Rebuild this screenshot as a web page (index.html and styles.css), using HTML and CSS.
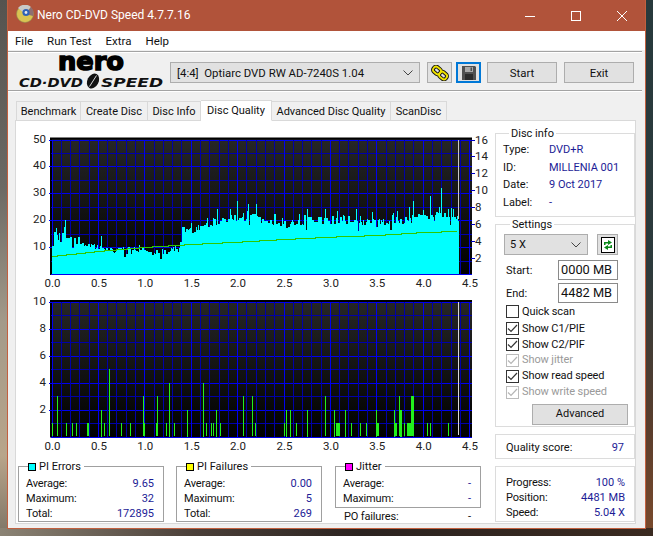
FILE: index.html
```html
<!DOCTYPE html>
<html lang="en">
<head>
<meta charset="utf-8">
<title>Nero CD-DVD Speed 4.7.7.16</title>
<link rel="stylesheet" href="styles.css">
</head>
<body>
<div class="window">
  <header class="titlebar">
    <svg class="app-icon" viewBox="0 0 18 18" width="18" height="18">
      <circle cx="9" cy="9" r="8.5" fill="#d9c452" stroke="#8f8a50" stroke-width=".6"/>
      <path d="M9 9 L2 3 A9 9 0 0 1 15 2 Z" fill="#c9c9c9"/>
      <path d="M9 9 L15 2 A9 9 0 0 1 17 11 Z" fill="#8d6f72"/>
      <circle cx="10" cy="7.5" r="3.6" fill="#2f62b8"/>
      <circle cx="10" cy="7.5" r="1.4" fill="#e7e7e7"/>
    </svg>
    <span class="app-title">Nero CD-DVD Speed 4.7.7.16</span>
    <div class="win-controls">
      <span class="win-btn"><svg viewBox="0 0 10 10" width="10" height="10"><path d="M0 5.5H10" stroke="#fff" fill="none"/></svg></span>
      <span class="win-btn"><svg viewBox="0 0 10 10" width="10" height="10"><rect x=".5" y=".5" width="9" height="9" stroke="#fff" fill="none"/></svg></span>
      <span class="win-btn"><svg viewBox="0 0 10 10" width="10" height="10"><path d="M0 0L10 10M10 0L0 10" stroke="#fff" fill="none"/></svg></span>
    </div>
  </header>
  <nav class="menubar">
    <span>File</span><span>Run Test</span><span>Extra</span><span>Help</span>
  </nav>
  <section class="toolbar">
    <svg class="logo" viewBox="0 0 146 37" width="146" height="37">
      <text class="logo-nero" x="40" y="18" textLength="66" lengthAdjust="spacingAndGlyphs">nero</text>
      <text class="logo-sub" x="1" y="35" textLength="64" lengthAdjust="spacingAndGlyphs">CD·DVD</text>
      <ellipse cx="75" cy="29" rx="5.6" ry="7.8" transform="rotate(28 75 29)" fill="#111"/>
      <path d="M71.500 34.500L78.500 23.500" stroke="#f0f0f0" stroke-width=".9"/>
      <text class="logo-sub" x="83" y="35" textLength="62" lengthAdjust="spacingAndGlyphs">SPEED</text>
    </svg>
    <div class="select drive"><span>[4:4]&nbsp;&nbsp;Optiarc DVD RW AD-7240S 1.04</span>
      <svg class="chev" viewBox="0 0 10 6" width="10" height="6"><path d="M.5 .5L5 5L9.500 .5" fill="none" stroke="#444"/></svg>
    </div>
    <button class="btn icon-btn">
      <svg viewBox="0 0 18 16" width="18" height="16">
        <g fill="none" transform="rotate(40 9 8)">
          <rect x="1" y="5" width="8" height="6" rx="2.500" stroke="#111" stroke-width="3.800"/>
          <rect x="9" y="5" width="8" height="6" rx="2.500" stroke="#111" stroke-width="3.800"/>
          <rect x="1" y="5" width="8" height="6" rx="2.500" stroke="#f0e400" stroke-width="1.900"/>
          <rect x="9" y="5" width="8" height="6" rx="2.500" stroke="#f0e400" stroke-width="1.900"/>
        </g>
      </svg>
    </button>
    <button class="btn icon-btn save">
      <svg viewBox="0 0 14 14" width="14" height="14">
        <path d="M0 0H13L14 1V14H0Z" fill="#505050"/>
        <rect x="3" y="1" width="8" height="5" fill="#a9a9a9"/>
        <rect x="8.500" y="1.500" width="1.500" height="3.500" fill="#505050"/>
        <rect x="3" y="8" width="8" height="6" fill="#2c2c2c"/>
      </svg>
    </button>
    <button class="btn wide start">Start</button>
    <button class="btn wide exit">Exit</button>
  </section>
  <div class="tabs">
    <span class="tab t1">Benchmark</span>
    <span class="tab t2">Create Disc</span>
    <span class="tab t3">Disc Info</span>
    <span class="tab t4 active">Disc Quality</span>
    <span class="tab t5">Advanced Disc Quality</span>
    <span class="tab t6">ScanDisc</span>
  </div>
  <main class="panel">
    <div class="left-col">
      <svg id="chart-top" class="chart" viewBox="18 128 472 164" width="472" height="164"></svg>
      <svg id="chart-bottom" class="chart" viewBox="18 292 472 164" width="472" height="164"></svg>
      <div class="legends">
        <fieldset class="legend">
          <legend><i class="swatch cyan"></i>PI Errors</legend>
          <div class="row"><span>Average:</span><b>9.65</b></div>
          <div class="row"><span>Maximum:</span><b>32</b></div>
          <div class="row"><span>Total:</span><b>172895</b></div>
        </fieldset>
        <fieldset class="legend">
          <legend><i class="swatch yellow"></i>PI Failures</legend>
          <div class="row"><span>Average:</span><b>0.00</b></div>
          <div class="row"><span>Maximum:</span><b>5</b></div>
          <div class="row"><span>Total:</span><b>269</b></div>
        </fieldset>
        <div class="jitter-col">
          <fieldset class="legend jitter">
            <legend><i class="swatch magenta"></i>Jitter</legend>
            <div class="row"><span>Average:</span><b>-</b></div>
            <div class="row"><span>Maximum:</span><b>-</b></div>
          </fieldset>
          <div class="row po"><span>PO failures:</span><b>-</b></div>
        </div>
      </div>
    </div>
    <aside class="right-col">
      <fieldset class="box info">
        <legend>Disc info</legend>
        <div class="info-row"><span>Type:</span><b>DVD+R</b></div>
        <div class="info-row"><span>ID:</span><b>MILLENIA 001</b></div>
        <div class="info-row"><span>Date:</span><b>9 Oct 2017</b></div>
        <div class="info-row"><span>Label:</span><b>-</b></div>
      </fieldset>
      <fieldset class="box settings">
        <legend>Settings</legend>
        <div class="speed-row">
          <div class="select speed"><span>5 X</span>
            <svg class="chev" viewBox="0 0 10 6" width="10" height="6"><path d="M.5 .5L5 5L9.500 .5" fill="none" stroke="#444"/></svg>
          </div>
          <button class="btn refresh">
            <svg viewBox="0 0 14 16" width="14" height="16">
              <rect x=".5" y=".5" width="13" height="15" fill="#fff" stroke="#000"/>
              <path d="M3 8V5H7V3L11 5.500L7 8V6.500H4.500V8Z" fill="#0a8a1a"/>
              <path d="M11 8V11H7V13L3 10.500L7 8V9.500H9.500V8Z" fill="#0a8a1a"/>
            </svg>
          </button>
        </div>
        <label class="field first"><span>Start:</span><span class="input">0000 MB</span></label>
        <label class="field"><span>End:</span><span class="input">4482 MB</span></label>
        <div class="check quick"><i class="cb"></i>Quick scan</div>
        <div class="check c1"><i class="cb"><svg viewBox="0 0 13 13" width="13" height="13"><path d="M2 6.500L5 9.500L11 3" fill="none" stroke="#333" stroke-width="1.200"/></svg></i>Show C1/PIE</div>
        <div class="check"><i class="cb"><svg viewBox="0 0 13 13" width="13" height="13"><path d="M2 6.500L5 9.500L11 3" fill="none" stroke="#333" stroke-width="1.200"/></svg></i>Show C2/PIF</div>
        <div class="check off"><i class="cb"><svg viewBox="0 0 13 13" width="13" height="13"><path d="M2 6.500L5 9.500L11 3" fill="none" stroke="#b5b5b5" stroke-width="1.200"/></svg></i>Show jitter</div>
        <div class="check"><i class="cb"><svg viewBox="0 0 13 13" width="13" height="13"><path d="M2 6.500L5 9.500L11 3" fill="none" stroke="#333" stroke-width="1.200"/></svg></i>Show read speed</div>
        <div class="check off"><i class="cb"><svg viewBox="0 0 13 13" width="13" height="13"><path d="M2 6.500L5 9.500L11 3" fill="none" stroke="#b5b5b5" stroke-width="1.200"/></svg></i>Show write speed</div>
        <button class="btn advanced">Advanced</button>
      </fieldset>
      <div class="box quality"><span>Quality score:</span><b>97</b></div>
      <div class="box progress">
        <div class="row"><span>Progress:</span><b>100 %</b></div>
        <div class="row"><span>Position:</span><b>4481 MB</b></div>
        <div class="row"><span>Speed:</span><b>5.04 X</b></div>
      </div>
    </aside>
  </main>
</div>
<script src="chart.js"></script>
</body>
</html>
```
FILE: styles.css
```css
* { box-sizing: border-box; }
html, body { margin: 0; height: 536px; overflow: hidden; }
body {
  font: 11px/14px Roboto, "Noto Sans", sans-serif;
  color: #111;
  background-color: #333;
  background-image:
    linear-gradient(90deg, #8b8374 0, #4a3f38 30%, #2b2320 55%, #3a2a20 100%),
    linear-gradient(180deg, #55534f 0, #6b6964 35%, #a39a8a 60%, #b8a58a 85%, #7d7466 100%),
    linear-gradient(180deg, #27393c 0, #2c3a3c 50%, #5a3d2c 80%, #7a4a2c 100%);
  background-size: 100% 8px, 50% 100%, 50% 100%;
  background-position: 0 100%, 0 0, 100% 0;
  background-repeat: no-repeat;
}
button { font: inherit; color: inherit; padding: 0; }
.window {
  width: 639px;
  height: 529px;
  margin-left: 7px;
  background: #f0f0f0;
  border: 1px solid #c2603f;
  border-top: 0;
}
.titlebar {
  height: 31px;
  background: #b1533a;
  display: flex;
  align-items: center;
  color: #fff;
  font-size: 12px;
  padding-left: 8px;
}
.app-icon { margin-right: 3px; margin-top: -3px; }
.app-title { margin-top: -1px; }
.win-controls { margin-left: auto; display: flex; height: 31px; }
.win-btn { width: 46px; display: flex; align-items: center; justify-content: center; }
.menubar {
  height: 19px;
  background: #fff;
  display: flex;
  gap: 14px;
  align-items: center;
  padding-left: 7px;
  font-size: 11.5px;
}
.toolbar {
  height: 40px;
  margin: 1px 3px 0 0;
  border-top: 1px solid #a3a3a3;
  border-bottom: 1px solid #a3a3a3;
  box-shadow: inset 0 1px #fff, 0 1px #fff;
  display: flex;
  align-items: center;
  padding-left: 10px;
  font-size: 11.4px;
}
.logo { flex: none; margin-top: -1px; overflow: visible; }
.logo-nero { font: 700 25px "DejaVu Sans", sans-serif; fill: #000; stroke: #000; stroke-width: 1.500px; }
.logo-sub { font: italic 700 12px "DejaVu Sans", sans-serif; fill: #111; }
.select {
  background: #e1e1e1;
  border: 1px solid #adadad;
  display: flex;
  align-items: center;
  justify-content: space-between;
  padding: 0 6px 0 5px;
}
.btn {
  background: #e1e1e1;
  border: 1px solid #adadad;
  display: flex;
  align-items: center;
  justify-content: center;
}
.toolbar .select, .toolbar .btn { height: 21px; margin-top: 3px; }
.drive { width: 250px; margin-left: 6px; padding-left: 6px; }
.icon-btn { width: 25px; margin-left: 7px; }
.save { margin-left: 4px; border: 2px solid #0078d7; }
.wide { width: 70px; }
.start { margin-left: 6px; }
.exit { margin-left: 7px; }
.tabs {
  display: flex;
  align-items: flex-end;
  height: 21px;
  margin: 9px 0 -1px 8px;
  position: relative;
  z-index: 1;
}
.tab {
  height: 20px;
  background: #f0f0f0;
  border: 1px solid #d9d9d9;
  border-left-width: 0;
  display: flex;
  align-items: center;
  justify-content: center;
  padding-top: 2px;
}
.t1 { width: 65px; border-left-width: 1px; }
.t2 { width: 67px; }
.t3 { width: 53px; }
.t4 { width: 71px; }
.t5 { width: 119px; }
.t6 { width: 56px; }
.tab.active { height: 21px; background: #fff; border-bottom-color: #fff; padding-top: 0; }
.panel {
  width: 621px;
  height: 404px;
  margin-left: 7px;
  background: #fff;
  border: 1px solid #d9d9d9;
  display: flex;
  padding: 7px 0 0 2px;
}
.left-col { width: 472px; flex: none; }
.chart { display: block; }
.chart text { font: 11.5px Roboto, "Noto Sans", sans-serif; fill: #222; }
.legends { display: flex; margin-top: 3px; height: 65px; }
fieldset { margin: 0; min-width: 0; }
.legend {
  width: 146px;
  height: 63px;
  border: 1px solid #a0a0a0;
  padding: 0 9px 0 7px;
  margin-right: 12px;
}
.legend legend { padding: 2px 3px 0 0; margin-left: 2px; display: flex; align-items: center; line-height: 12px; height: 14px; }
.swatch { width: 8px; height: 8px; border: 1px solid #000; margin-right: 3px; display: block; }
.cyan { background: #00ffff; }
.yellow { background: #ffff00; }
.magenta { background: #ff00ff; }
.row { display: flex; justify-content: space-between; height: 15px; line-height: 15px; }
.row span { letter-spacing: -.15px; }
.legend .row:first-of-type { margin-top: 3px; }
b { font-weight: 400; color: #1c1c96; }
.jitter-col { width: 146px; margin-left: 1px; }
.jitter { height: 49px; margin: 0; }
.po { height: 17px; padding: 1px 10px 0 9px; }
.po b { color: #111; }
.right-col { margin: -2px 0 0 5px; width: 140px; flex: none; }
.box { border: 1px solid #dcdcdc; width: 140px; padding: 0; margin: 0; }
.box legend { margin-left: 6px; padding: 2px 2px 0; height: 14px; line-height: 12px; }
.info { height: 91px; padding: 1px 0 0 7px; }
.info-row { display: flex; height: 17.700px; line-height: 17px; }
.info-row span { width: 46px; }
.settings { margin-top: 0; height: 210px; padding: 3px 0 0 8px; }
.speed-row { display: flex; gap: 9px; }
.select.speed { width: 84px; height: 21px; }
.refresh { width: 21px; height: 21px; }
.field { display: flex; align-items: center; height: 20px; padding-left: 2px; }
.field.first { margin-top: 5px; margin-bottom: 3px; }
.field > span:first-child { width: 52px; padding-top: 2px; }
.input { width: 60px; height: 20px; border: 1px solid #8a8a8a; background: #fff; padding-left: 2px; line-height: 17px; font-size: 12.8px; }
.check { display: flex; align-items: center; height: 15.800px; padding-left: 2px; letter-spacing: -.1px; }
.quick { height: 17px; }
.c1 { margin-top: 1px; }
.cb { width: 13px; height: 13px; border: 1px solid #333; background: #fff; margin-right: 3px; display: block; flex: none; }
.cb svg { display: block; margin: -1px; }
.off { color: #9a9a9a; }
.off .cb { border-color: #bbb; }
.advanced { width: 96px; height: 21px; margin: 4px 0 0 28px; }
.quality { margin-top: 7px; height: 25px; display: flex; justify-content: space-between; align-items: center; padding: 2px 10px 0 10px; }
.progress { margin-top: 7px; height: 56px; padding: 8px 9px 0 10px; }
```
FILE: chart.js
```js
(function () {
  var NS = 'http://www.w3.org/2000/svg';
  var X0 = 51.5, SCALE = 92.8, END = 458;

  function add(svg, tag, attrs, text) {
    var el = document.createElementNS(NS, tag);
    for (var k in attrs) el.setAttribute(k, attrs[k]);
    if (text !== undefined) el.textContent = text;
    svg.appendChild(el);
    return el;
  }
  function interp(table, t) {
    for (var i = 1; i < table.length; i++) {
      if (t <= table[i][0]) {
        var a = table[i - 1], b = table[i];
        return a[1] + (b[1] - a[1]) * (t - a[0]) / (b[0] - a[0]);
      }
    }
    return table[table.length - 1][1];
  }

  function frame(svg, id, top, bottom, labels) {
    var defs = add(svg, 'defs', {});
    var g = add(defs, 'linearGradient', { id: id, x1: 0, y1: 0, x2: 0, y2: 1 });
    add(g, 'stop', { offset: 0, 'stop-color': '#262626' });
    add(g, 'stop', { offset: 1, 'stop-color': '#000' });
    add(svg, 'rect', { x: 50, y: top - 2, width: 422, height: bottom - top + 3, fill: '#000' });
    add(svg, 'rect', { x: 52, y: top, width: 420, height: bottom - top, fill: 'url(#' + id + ')' });
    var h = bottom - top;
    var grid = add(svg, 'g', { 'shape-rendering': 'crispEdges' });
    for (var i = 0; i <= labels * 2; i++) {
      var y = Math.round(top + h * i / (labels * 2)) + .5;
      add(grid, 'path', { d: 'M51 ' + y + 'H472', stroke: i % 2 ? '#0000a8' : '#0000f0', fill: 'none' });
    }
    for (var j = 0; j <= 45; j++) {
      var x = Math.round(X0 + 9.28 * j) + .5;
      add(grid, 'path', { d: 'M' + x + ' ' + top + 'V' + bottom, stroke: j % 5 ? '#0000a8' : '#0000f0', fill: 'none' });
    }
    for (var k = 0; k <= 9; k++) {
      var v = (k * 0.5).toFixed(1);
      add(svg, 'text', { x: X0 + 46.4 * k + 1, y: bottom + 13, 'text-anchor': 'middle' }, v);
    }
    return grid;
  }

  /* upper chart: PI errors */
  var top = document.getElementById('chart-top');
  var T = 139.5, B = 274;
  frame(top, 'bgTop', T, B, 5);
  [50, 40, 30, 20, 10].forEach(function (v, i) {
    var y = T + (B - T) * i / 5;
    add(top, 'path', { d: 'M49 ' + Math.round(y) + '.5H51', stroke: '#00f' });
    add(top, 'text', { x: 46, y: y + 3, 'text-anchor': 'end' }, v);
  });
  [16, 14, 12, 10, 8, 6, 4, 2].forEach(function (v, i) {
    var y = T + 16.9 * i;
    add(top, 'path', { d: 'M471 ' + Math.round(y) + '.5H475', stroke: '#0000c8' });
    add(top, 'text', { x: 475, y: y + 4 }, v);
  });

  var env = [[0, 14.5], [.15, 13.5], [.3, 11], [.5, 10], [.56, 9], [.6, 8.5], [1, 8.5], [1.38, 9], [1.39, 16], [1.5, 16.5], [1.7, 18.5],
    [1.9, 21], [2.2, 21], [2.5, 18.5], [2.8, 20], [3.2, 20], [3.5, 19], [3.8, 20], [4, 21.5], [4.2, 22], [4.38, 20]];
  var spikes = { 0.15: 20, 0.05: 17, 0.53: 14, 1.68: 21, 1.78: 24, 1.92: 24, 2: 27, 2.12: 26, 2.2: 26, 2.75: 24, 2.95: 24,
    3.28: 24, 3.45: 23, 3.9: 27, 3.85: 25, 4.08: 29, 4.18: 25, 4.2: 32, 4.27: 24, 4.33: 24 };
  var seed = 12345;
  function rnd() { seed = (seed * 1664525 + 1013904223) % 4294967296; return seed / 4294967296; }
  var d = '', prev = 0;
  var spikeAt = {};
  Object.keys(spikes).forEach(function (k) { spikeAt[Math.round(X0 + k * SCALE)] = spikes[k]; });
  for (var x = 52; x <= END; x++) {
    var t = (x - X0) / SCALE;
    var base = interp(env, t);
    var r = rnd();
    var v;
    if (x % 2 === 0 || r > .7) {
      v = base + (rnd() - .5) * 3;
      if (r < .08) v -= 2.500;
      if (r > .94) v += 2.500;
      prev = v;
    } else {
      v = prev;
    }
    if (spikeAt[x]) v = spikeAt[x];
    var y = Math.round(B - v * 2.69);
    d += 'M' + (x + .5) + ' ' + B + 'V' + y;
  }
  add(top, 'path', { d: d, stroke: '#00ffff', fill: 'none', 'shape-rendering': 'crispEdges' });
  add(top, 'path', { d: 'M458.500 ' + T + 'V219', stroke: '#c8c8c8', fill: 'none', 'shape-rendering': 'crispEdges' });

  var lineTable = [[52, 256], [98, 251], [144, 247], [191, 244], [238, 241.700], [284, 239], [330, 236.700], [377, 235], [423, 232], [457, 231]];
  var pts = 'M52 256', cur = 256;
  for (var lx = 53; lx <= 457; lx++) {
    var ly = Math.round(interp(lineTable, lx));
    if (ly !== cur) { pts += 'H' + lx + 'V' + ly; cur = ly; }
  }
  pts += 'H457';
  add(top, 'path', { d: pts, stroke: '#2fc800', 'stroke-width': 1, fill: 'none', transform: 'translate(0 .5)', 'shape-rendering': 'crispEdges' });

  /* lower chart: PI failures */
  var bot = document.getElementById('chart-bottom');
  var T2 = 302, B2 = 436.5;
  frame(bot, 'bgBot', T2, B2, 5);
  [10, 8, 6, 4, 2].forEach(function (v, i) {
    var y = T2 + (B2 - T2) * i / 5;
    add(bot, 'path', { d: 'M49 ' + Math.round(y) + '.5H51', stroke: '#00f' });
    add(bot, 'text', { x: 46, y: y + 3, 'text-anchor': 'end' }, v);
  });
  /* [page x, value, width] */
  var bars = [[52, 1], [57, 3], [66, 1], [72, 1], [76, 1], [86.500, 1, 2], [101, 2], [104, 1], [109, 5], [121, 1], [130, 1],
    [142.500, 1, 2], [143, 3], [156, 1, 2], [157, 3], [166, 1], [169, 4], [174, 1], [187, 2], [203, 4], [206, 1], [211, 1], [213, 1],
    [216, 2], [220, 1], [243, 3], [252, 3], [255, 1], [284, 1], [286, 2], [290, 2], [296, 1], [307, 2], [325, 3], [334, 2],
    [336, 1, 4], [345, 2], [351, 1], [360, 1], [366, 1], [376, 2], [377, 1, 2], [394, 2], [395, 1, 2], [399, 3], [400, 2, 2],
    [404, 1], [407, 1, 4], [411, 3, 3], [427, 1], [430, 1], [448, 1]];
  var barG = add(bot, 'g', { 'shape-rendering': 'crispEdges', fill: '#22f01c' });
  bars.forEach(function (b) {
    var w = b[2] || 1;
    var h = b[1] * 13.45;
    add(barG, 'rect', { x: Math.round(b[0]), y: Math.round(B2 - h), width: w, height: Math.round(h) });
  });
  add(bot, 'path', { d: 'M458.500 ' + T2 + 'V435', stroke: '#d8d8d8', fill: 'none', 'shape-rendering': 'crispEdges' });
})();
```
